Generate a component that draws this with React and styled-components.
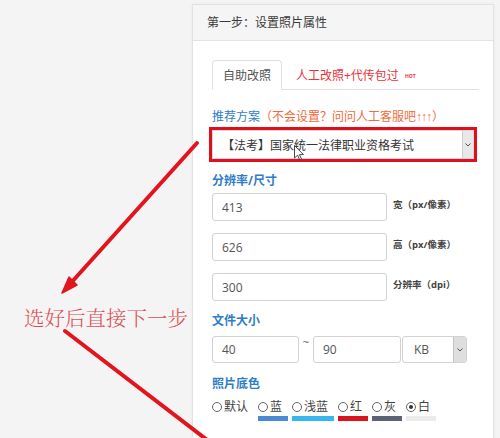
import styled, { createGlobalStyle } from "styled-components";

const GlobalStyle = createGlobalStyle`
  html, body {
    margin: 0;
    padding: 0;
  }
  body {
    background: #f4f4f4;
    font-family: "Open Sans", "Noto Sans CJK SC", sans-serif;
  }
`;

const swatches = [
  { label: "默认", color: "transparent" },
  { label: "蓝", color: "#4a89d4" },
  { label: "浅蓝", color: "#38b6f0" },
  { label: "红", color: "#d8141c" },
  { label: "灰", color: "#5b6274" },
  { label: "白", color: "#ebebeb", checked: true },
];

const sizes = [
  { value: "413", label: "宽（px/像素）" },
  { value: "626", label: "高（px/像素）" },
  { value: "300", label: "分辨率（dpi）" },
];

function Chevron() {
  return (
    <svg width="6" height="4" viewBox="0 0 6 4">
      <polyline points="0.5,0.5 3,3 5.5,0.5" fill="none" stroke="#555" strokeWidth="1" />
    </svg>
  );
}

export default function App() {
  return (
    <Page>
      <GlobalStyle />
      <Aside>
        <Hint>选好后直接下一步</Hint>
      </Aside>

      <Panel>
        <PanelHeader>第一步：设置照片属性</PanelHeader>
        <PanelBody>
          <TabBar>
            <Tab active>自助改照</Tab>
            <Tab>
              人工改照+代传包过<Hot>HOT</Hot>
            </Tab>
          </TabBar>

          <SectionTitle top={19} bottom={2}>
            推荐方案
            <Note>
              （不会设置？问问人工客服吧<Arrows>↑↑↑</Arrows>）
            </Note>
          </SectionTitle>
          <PlanSelect>
            <PlanInner>
              <PlanText>【法考】国家统一法律职业资格考试</PlanText>
              <ArrowBox>
                <Chevron />
              </ArrowBox>
            </PlanInner>
            <Cursor width="10" height="16" viewBox="0 0 10 16">
              <path
                d="M0.5 0.5 L0.5 13 L3.6 10.2 L5.8 15 L7.6 14.2 L5.4 9.6 L9.4 9.6 Z"
                fill="#fff"
                stroke="#333"
                strokeWidth="0.9"
              />
            </Cursor>
          </PlanSelect>

          <SectionTitle bold top={11} bottom={4}>
            分辨率/尺寸
          </SectionTitle>
          {sizes.map((s) => (
            <FieldRow key={s.value}>
              <TextInput width={175}>{s.value}</TextInput>
              <SideLabel>{s.label}</SideLabel>
            </FieldRow>
          ))}

          <SectionTitle bold top={1} bottom={7}>
            文件大小
          </SectionTitle>
          <SizeRow>
            <TextInput width={87} height={27}>40</TextInput>
            <Tilde>~</Tilde>
            <TextInput width={88} height={27}>90</TextInput>
            <UnitSelect>
              <UnitText>KB</UnitText>
              <UnitArrow>
                <Chevron />
              </UnitArrow>
            </UnitSelect>
          </SizeRow>

          <SectionTitle bold top={13} bottom={7}>
            照片底色
          </SectionTitle>
          <SwatchRow>
            {swatches.map((s) => (
              <SwatchItem key={s.label}>
                <RadioLabel>
                  <Radio checked={s.checked} />
                  {s.label}
                </RadioLabel>
                <Swatch color={s.color} />
              </SwatchItem>
            ))}
          </SwatchRow>
        </PanelBody>
      </Panel>

      <Overlay width="500" height="438" viewBox="0 0 500 438">
        <line x1="197" y1="143" x2="70" y2="284" stroke="#e3141c" strokeWidth="4" strokeLinecap="round" />
        <polygon points="62,293 77,285 69,277" fill="#e3141c" stroke="#e3141c" strokeWidth="1.5" strokeLinejoin="round" />
        <line x1="65" y1="331" x2="215" y2="446" stroke="#e3141c" strokeWidth="4" strokeLinecap="round" />
      </Overlay>
    </Page>
  );
}

const Page = styled.div`
  position: relative;
  display: flex;
  width: 500px;
  height: 438px;
  overflow: hidden;
  background: #f4f4f4;
`;

const Aside = styled.div`
  width: 192px;
  flex-shrink: 0;
  box-sizing: border-box;
  padding: 303px 0 0 24px;
`;

const Hint = styled.div`
  font-family: "Noto Serif CJK SC", "Noto Sans CJK SC", serif;
  font-size: 20.5px;
  line-height: 28px;
  color: #db4e54;
  white-space: nowrap;
  font-weight: 300;
`;

const Panel = styled.div`
  margin-top: 4px;
  width: 302px;
  flex-shrink: 0;
  align-self: flex-start;
  height: 460px;
  box-sizing: border-box;
  background: #fff;
  border: 1px solid #e2e2e2;
  box-shadow: 0 0 3px rgba(0, 0, 0, 0.05);
`;

const PanelHeader = styled.div`
  height: 35px;
  line-height: 36px;
  padding-left: 14px;
  background: #f5f5f5;
  border-bottom: 1px solid #e3e3e3;
  font-size: 12px;
  color: #3a3a3a;
`;

const PanelBody = styled.div`
  padding: 19px 14px 0 19px;
`;

const TabBar = styled.div`
  display: flex;
  align-items: flex-end;
  height: 29px;
  border-bottom: 1px solid #e0e0e0;
`;

const Tab = styled.div`
  display: flex;
  align-items: center;
  justify-content: ${(p) => (p.active ? "center" : "flex-start")};
  box-sizing: border-box;
  height: ${(p) => (p.active ? "30px" : "29px")};
  width: ${(p) => (p.active ? "70px" : "auto")};
  padding-left: ${(p) => (p.active ? "0" : "14px")};
  margin-bottom: ${(p) => (p.active ? "-1px" : "0")};
  background: #fff;
  border: ${(p) => (p.active ? "1px solid #e0e0e0" : "none")};
  border-bottom-color: ${(p) => (p.active ? "#fff" : "transparent")};
  border-radius: 4px 4px 0 0;
  font-size: 12px;
  color: ${(p) => (p.active ? "#555" : "#e8323c")};
  white-space: nowrap;
`;

const Hot = styled.span`
  margin-left: 6px;
  margin-top: 3px;
  font-size: 5px;
  font-weight: 700;
  color: #e8323c;
`;

const SectionTitle = styled.div`
  margin: ${(p) => p.top}px 0 ${(p) => p.bottom}px;
  font-size: 12px;
  line-height: 16px;
  font-weight: ${(p) => (p.bold ? 700 : 400)};
  color: #2f7dc6;
  white-space: nowrap;
`;

const Note = styled.span`
  color: #f26b3a;
  font-weight: 400;
`;

const Arrows = styled.span`
  font-family: "Liberation Sans", sans-serif;
  font-size: 12px;
  letter-spacing: -1px;
  padding-right: 1px;
`;

const PlanSelect = styled.div`
  position: relative;
  margin-left: -3px;
  width: 268px;
  height: 35px;
  box-sizing: border-box;
  border: 3px solid #e0101a;
`;

const PlanInner = styled.div`
  display: flex;
  align-items: stretch;
  height: 100%;
  box-sizing: border-box;
  border: 1px solid #d3d4ea;
`;

const PlanText = styled.div`
  flex: 1;
  display: flex;
  align-items: center;
  padding-left: 9px;
  font-size: 12px;
  color: #333;
`;

const ArrowBox = styled.div`
  width: 10px;
  display: flex;
  align-items: center;
  justify-content: center;
  background: #e8e8e8;
  border-left: 1px solid #cfcfcf;
`;

const Cursor = styled.svg`
  position: absolute;
  left: 82px;
  top: 15px;
`;

const FieldRow = styled.div`
  display: flex;
  align-items: flex-start;
  gap: 6px;
  margin-bottom: 12px;
`;

const TextInput = styled.div`
  display: flex;
  align-items: center;
  box-sizing: border-box;
  width: ${(p) => p.width}px;
  height: ${(p) => p.height || 28}px;
  padding-left: 9px;
  border: 1px solid #d2d2d2;
  border-radius: 3px;
  font-size: 12px;
  color: #555;
  background: #fff;
`;

const SideLabel = styled.div`
  padding-top: 6px;
  font-size: 9.5px;
  line-height: 12px;
  font-weight: 700;
  color: #444;
  white-space: nowrap;
`;

const SizeRow = styled.div`
  display: flex;
  align-items: flex-start;
`;

const Tilde = styled.div`
  width: 14px;
  text-align: center;
  font-size: 11px;
  line-height: 12px;
  color: #555;
`;

const UnitSelect = styled.div`
  display: flex;
  box-sizing: border-box;
  width: 65px;
  height: 27px;
  margin-left: 1px;
  border: 1px solid #d2d2d2;
  border-radius: 3px;
  overflow: hidden;
`;

const UnitText = styled.div`
  flex: 1;
  display: flex;
  align-items: center;
  padding-left: 11px;
  font-size: 12px;
  color: #555;
`;

const UnitArrow = styled.div`
  width: 12px;
  display: flex;
  align-items: center;
  justify-content: center;
  background: #dedede;
  border-left: 1px solid #c4c4c4;
`;

const SwatchRow = styled.div`
  display: flex;
  gap: 4px;
`;

const SwatchItem = styled.div`
  display: flex;
  flex-direction: column;
`;

const RadioLabel = styled.div`
  display: flex;
  align-items: center;
  gap: 2px;
  padding-right: 6px;
  font-size: 12px;
  line-height: 16px;
  color: #444;
`;

const Radio = styled.span`
  position: relative;
  width: 10px;
  height: 10px;
  box-sizing: border-box;
  border: 1px solid #666;
  border-radius: 50%;
  &::after {
    content: "";
    display: ${(p) => (p.checked ? "block" : "none")};
    position: absolute;
    left: 2px;
    top: 2px;
    width: 4px;
    height: 4px;
    border-radius: 50%;
    background: #333;
  }
`;

const Swatch = styled.div`
  height: 5px;
  margin-top: 1px;
  background: ${(p) => p.color};
`;

const Overlay = styled.svg`
  position: absolute;
  left: 0;
  top: 0;
  pointer-events: none;
  z-index: 2;
`;
